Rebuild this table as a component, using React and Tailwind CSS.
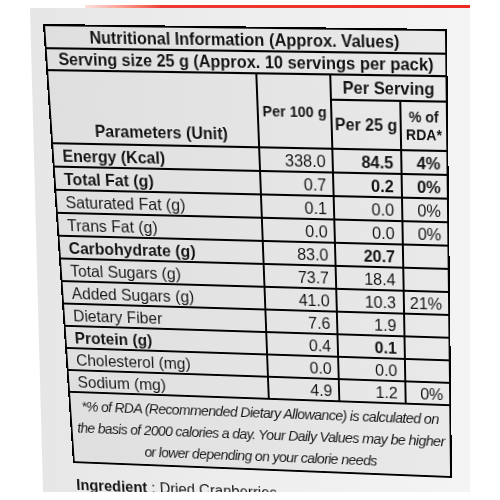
import React from "react";

const rows = [
  { label: "Energy (Kcal)", b: true, v1: "338.0", v2: "84.5", v3: "4%", b2: true, b3: true },
  { label: "Total Fat (g)", b: true, v1: "0.7", v2: "0.2", v3: "0%", b2: true, b3: true },
  { label: "Saturated Fat (g)", v1: "0.1", v2: "0.0", v3: "0%" },
  { label: "Trans Fat (g)", v1: "0.0", v2: "0.0", v3: "0%" },
  { label: "Carbohydrate (g)", b: true, v1: "83.0", v2: "20.7", v3: "", b2: true },
  { label: "Total Sugars (g)", v1: "73.7", v2: "18.4", v3: "" },
  { label: "Added Sugars (g)", v1: "41.0", v2: "10.3", v3: "21%" },
  { label: "Dietary Fiber", v1: "7.6", v2: "1.9", v3: "" },
  { label: "Protein (g)", b: true, v1: "0.4", v2: "0.1", v3: "", b2: true },
  { label: "Cholesterol (mg)", v1: "0.0", v2: "0.0", v3: "" },
  { label: "Sodium (mg)", v1: "4.9", v2: "1.2", v3: "0%" },
];

export default function App() {
  return (
    <div className="w-[500px] h-[500px] bg-white overflow-hidden text-[#111] font-['Liberation_Sans',Arial,sans-serif]">
      <div className="ml-[85px] mt-[5px] h-[3px] w-[385px] bg-linear-to-r from-[#fbe3e1] via-[#ee3a33] via-20% to-[#ec2a22]" />
      <div className="ml-[30px] w-[440px] h-[484px] overflow-hidden bg-linear-to-r from-[#e6e6e6] via-[#eeeeee] to-[#f4f4f4] [clip-path:polygon(0_0,100%_0,100%_100%,13px_100%)] pt-[16px] pl-[13px]">
        <div className="w-[404px] origin-top-left [transform:matrix3d(0.97551,0.012074,0,-0.00006061,0.072047,1.054279,0,0.00014929,0,0,1,0,0,0,0,1)] [text-shadow:0_0_2px_#ffffff]">
          <div className="w-[404px] h-[444px] border-2 border-black flex flex-col bg-linear-to-r from-[#dfdfdf] to-[#e9e9e9]">
            <div className="h-[22px] shrink-0 border-b-2 border-black flex items-center justify-center text-[16.4px] leading-[20px] font-bold">
              Nutritional Information (Approx. Values)
            </div>
            <div className="h-[21px] shrink-0 border-b-2 border-black flex items-center justify-center text-[16.4px] leading-[19px] font-bold">
              Serving size 25 g (Approx. 10 servings per pack)
            </div>
            <div className="h-[71px] shrink-0 border-b-2 border-black flex">
              <div className="w-[213px] shrink-0 border-r-2 border-black flex items-end justify-center pl-[14px] pb-[2px] text-[16.4px] leading-[20px] font-bold">
                Parameters (Unit)
              </div>
              <div className="w-[74px] shrink-0 border-r-2 border-black flex items-center justify-center text-[14.5px] leading-[20px] font-bold whitespace-nowrap">
                Per 100 g
              </div>
              <div className="w-[113px] shrink-0 flex flex-col">
                <div className="h-[24px] shrink-0 border-b-2 border-black flex items-center justify-center text-[16.4px] leading-[20px] font-bold">
                  Per Serving
                </div>
                <div className="flex flex-1">
                  <div className="w-[69px] shrink-0 border-r-2 border-black flex items-center justify-center text-[16px] leading-[20px] font-bold whitespace-nowrap">
                    Per 25 g
                  </div>
                  <div className="w-[44px] shrink-0 flex flex-col items-center justify-center text-[14px] leading-[17px] font-bold">
                    <span>% of</span>
                    <span>RDA*</span>
                  </div>
                </div>
              </div>
            </div>
            {rows.map((r) => (
              <div key={r.label} className="h-[23px] shrink-0 border-b-2 border-black flex text-[16.5px] leading-[20px]">
                <div className={"w-[213px] shrink-0 border-r-2 border-black flex items-center pl-[9px] whitespace-nowrap " + (r.b ? "font-bold" : "font-normal")}>
                  {r.label}
                </div>
                <div className="w-[74px] shrink-0 border-r-2 border-black flex items-center justify-end pr-[6px]">
                  {r.v1}
                </div>
                <div className={"w-[69px] shrink-0 border-r-2 border-black flex items-center justify-end pr-[7px] " + (r.b2 ? "font-bold" : "font-normal")}>
                  {r.v2}
                </div>
                <div className={"w-[44px] shrink-0 flex items-center justify-end pr-[6px] " + (r.b3 ? "font-bold" : "font-normal")}>
                  {r.v3}
                </div>
              </div>
            ))}
            <div className="flex-1 flex flex-col items-center justify-center italic text-[15px] leading-[23px] tracking-[-0.7px] whitespace-nowrap">
              <span>*% of RDA (Recommended Dietary Allowance) is calculated on</span>
              <span>the basis of 2000 calories a day. Your Daily Values may be higher</span>
              <span>or lower depending on your calorie needs</span>
            </div>
          </div>
          <div className="mt-[14px] pl-[2px] text-[16px] leading-[20px] whitespace-nowrap">
            <span className="font-bold">Ingredient</span>
            <span> : Dried Cranberries</span>
          </div>
        </div>
      </div>
    </div>
  );
}
